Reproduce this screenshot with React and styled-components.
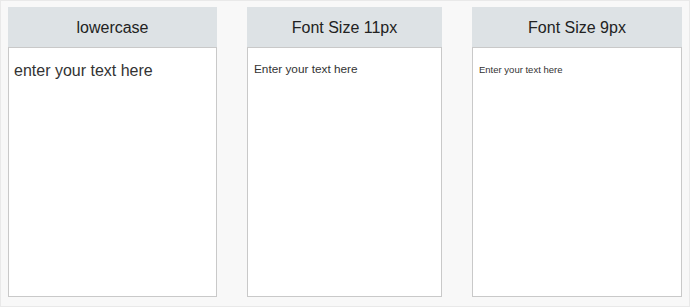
import React from "react";
import styled, { createGlobalStyle } from "styled-components";

const GlobalStyle = createGlobalStyle`
  html, body {
    margin: 0;
    padding: 0;
    background: #f8f8f8;
  }
  * {
    box-sizing: border-box;
  }
`;

const Page = styled.div`
  width: 690px;
  height: 307px;
  padding: 6px 7px 9px;
  background: #f8f8f8;
  border: 1px solid #e9e9e9;
  display: grid;
  grid-template-columns: 209px 195px 210px;
  column-gap: 30px;
  font-family: "Liberation Sans", Arial, sans-serif;
`;

const Panel = styled.div`
  display: flex;
  flex-direction: column;
  min-height: 0;
`;

const Header = styled.div`
  height: 40px;
  flex: none;
  display: flex;
  align-items: center;
  justify-content: center;
  padding-top: 1px;
  background: #dde2e5;
  color: #222;
  font-size: 16px;
`;

const Editor = styled.textarea`
  flex: 1;
  width: 100%;
  margin: 0;
  resize: none;
  outline: none;
  background: #fff;
  border: 1px solid #c9c9c9;
  padding: ${(p) => p.$pad};
  font-family: "Liberation Sans", Arial, sans-serif;
  font-size: ${(p) => p.$size}px;
  line-height: 1.25;
  text-transform: ${(p) => (p.$lower ? "lowercase" : "none")};
  color: #333;

  &::placeholder {
    color: #333;
    opacity: 1;
  }
`;

const panels = [
  { title: "lowercase", size: 16, pad: "13px 5px", lower: true },
  { title: "Font Size 11px", size: 11.8, pad: "14px 6px" },
  { title: "Font Size 9px", size: 9.5, pad: "16px 6px" },
];

export default function App() {
  return (
    <>
      <GlobalStyle />
      <Page>
        {panels.map((p) => (
          <Panel key={p.title}>
            <Header>{p.title}</Header>
            <Editor
              $size={p.size}
              $pad={p.pad}
              $lower={p.lower}
              placeholder={p.lower ? "enter your text here" : "Enter your text here"}
            />
          </Panel>
        ))}
      </Page>
    </>
  );
}
